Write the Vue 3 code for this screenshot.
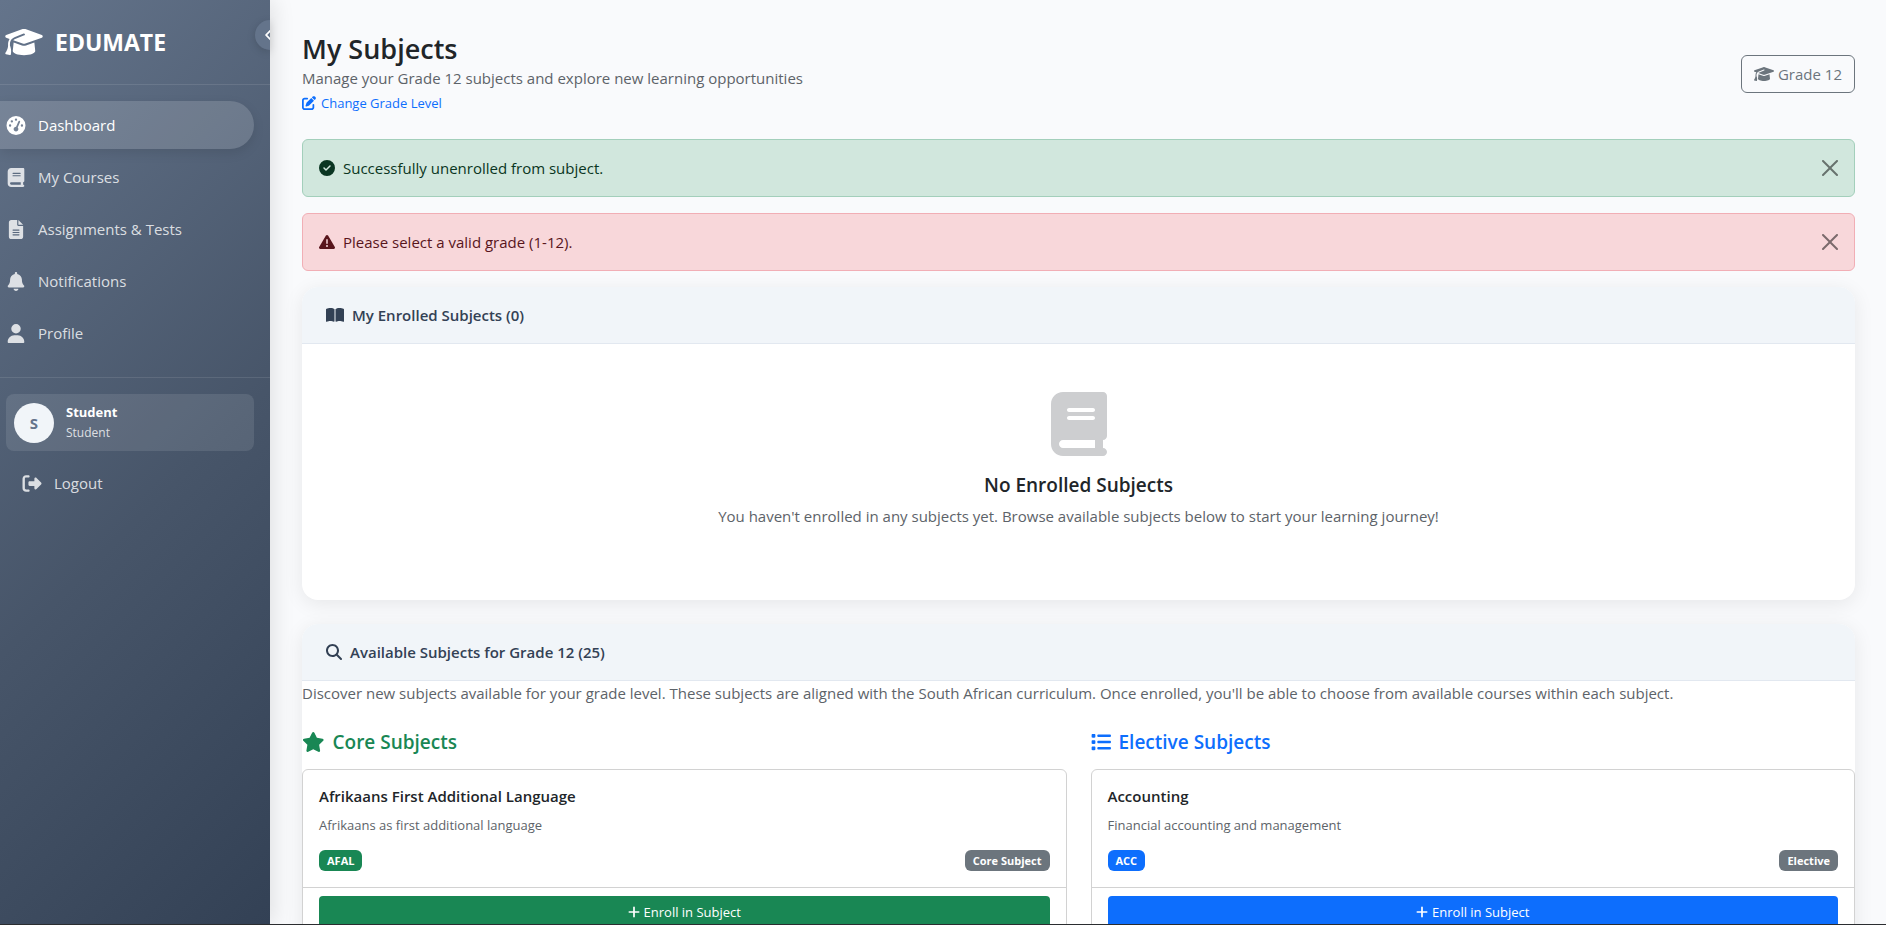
<script setup>
import { ref } from 'vue'

const icons = {
  cap: { w: 640, d: 'M320 32c-8.1 0-16.1 1.4-23.7 4.1L15.8 137.4C6.3 140.9 0 149.9 0 160s6.3 19.1 15.8 22.6l57.9 20.9C57.3 229.3 48 259.8 48 291.9v28.1c0 28.4-10.8 57.7-22.3 80.8c-6.5 13-13.9 25.8-22.5 37.6C0 442.7-.9 448.3 .9 453.4s6 8.9 11.2 10.2l64 16c4.2 1.1 8.7 .3 12.4-2s6.3-6.1 7.1-10.4c8.6-42.8 4.3-81.2-2.1-108.7C90.3 344.3 86 329.8 80 316.5V291.9c0-30.2 10.2-58.7 27.9-81.5c12.9-15.5 29.6-28 49.2-35.7l157-61.7c8.2-3.2 17.5 .8 20.7 9s-.8 17.5-9 20.7l-157 61.7c-12.4 4.9-23.3 12.4-32.2 21.6l159.6 57.6c7.6 2.7 15.6 4.1 23.7 4.1s16.1-1.4 23.7-4.1L624.2 182.6c9.5-3.4 15.8-12.5 15.8-22.6s-6.3-19.1-15.8-22.6L343.7 36.1C336.1 33.4 328.1 32 320 32zM128 408c0 35.3 86 72 192 72s192-36.7 192-72L496.7 262.6 354.5 314c-11.1 4-22.8 6-34.5 6s-23.5-2-34.5-6L143.3 262.6 128 408z' },
  gauge: { w: 512, d: 'M0 256a256 256 0 1 1 512 0A256 256 0 1 1 0 256zM288 96a32 32 0 1 0 -64 0 32 32 0 1 0 64 0zM256 416c35.3 0 64-28.7 64-64c0-17.4-6.9-33.1-18.1-44.6L366 161.7c5.3-12.1-.2-26.3-12.3-31.6s-26.3 .2-31.6 12.3L257.9 288c-.6 0-1.3 0-1.9 0c-35.3 0-64 28.7-64 64s28.7 64 64 64zM176 144a32 32 0 1 0 -64 0 32 32 0 1 0 64 0zM96 288a32 32 0 1 0 0-64 32 32 0 1 0 0 64zm352-32a32 32 0 1 0 -64 0 32 32 0 1 0 64 0z' },
  book: { w: 448, d: 'M96 0C43 0 0 43 0 96V416c0 53 43 96 96 96H384h32c17.7 0 32-14.3 32-32s-14.3-32-32-32V384c17.7 0 32-14.3 32-32V32c0-17.7-14.3-32-32-32H384 96zm0 384H352v64H96c-17.7 0-32-14.3-32-32s14.3-32 32-32zm32-240c0-8.8 7.2-16 16-16H336c8.8 0 16 7.2 16 16s-7.2 16-16 16H144c-8.8 0-16-7.2-16-16zm16 48H336c8.8 0 16 7.2 16 16s-7.2 16-16 16H144c-8.8 0-16-7.2-16-16s7.2-16 16-16z' },
  file: { w: 384, d: 'M64 0C28.7 0 0 28.7 0 64V448c0 35.3 28.7 64 64 64H320c35.3 0 64-28.7 64-64V160H256c-17.7 0-32-14.3-32-32V0H64zM256 0V128H384L256 0zM112 256H272c8.8 0 16 7.2 16 16s-7.2 16-16 16H112c-8.8 0-16-7.2-16-16s7.2-16 16-16zm0 64H272c8.8 0 16 7.2 16 16s-7.2 16-16 16H112c-8.8 0-16-7.2-16-16s7.2-16 16-16zm0 64H272c8.8 0 16 7.2 16 16s-7.2 16-16 16H112c-8.8 0-16-7.2-16-16s7.2-16 16-16z' },
  bell: { w: 448, d: 'M224 0c-17.7 0-32 14.3-32 32V51.2C119 66 64 130.6 64 208v18.8c0 47-17.3 92.4-48.5 127.6l-7.4 8.3c-8.4 9.4-10.4 22.9-5.3 34.4S19.4 416 32 416H416c12.6 0 24-7.4 29.2-18.9s3.1-25-5.3-34.4l-7.4-8.3C401.3 319.2 384 273.9 384 226.8V208c0-77.4-55-142-128-156.8V32c0-17.7-14.3-32-32-32zm45.3 493.3c12-12 18.7-28.3 18.7-45.3H224 160c0 17 6.7 33.3 18.7 45.3s28.3 18.7 45.3 18.7s33.3-6.7 45.3-18.7z' },
  user: { w: 448, d: 'M224 256A128 128 0 1 0 224 0a128 128 0 1 0 0 256zm-45.7 48C79.8 304 0 383.8 0 482.3C0 498.7 13.3 512 29.7 512H418.3c16.4 0 29.7-13.3 29.7-29.7C448 383.8 368.2 304 269.7 304H178.3z' },
  logout: { w: 512, d: 'M377.9 105.9L500.7 228.7c7.2 7.2 11.3 17.1 11.3 27.3s-4.1 20.1-11.3 27.3L377.9 406.1c-6.4 6.4-15 9.9-24 9.9c-18.7 0-33.9-15.2-33.9-33.9l0-62.1-128 0c-17.7 0-32-14.3-32-32l0-64c0-17.7 14.3-32 32-32l128 0 0-62.1c0-18.7 15.2-33.9 33.9-33.9c9 0 17.6 3.6 24 9.9zM160 96L96 96c-17.7 0-32 14.3-32 32l0 256c0 17.7 14.3 32 32 32l64 0c17.7 0 32 14.3 32 32s-14.3 32-32 32l-64 0c-53 0-96-43-96-96L0 128C0 75 43 32 96 32l64 0c17.7 0 32 14.3 32 32s-14.3 32-32 32z' },
  chevron: { w: 320, d: 'M9.4 233.4c-12.5 12.5-12.5 32.8 0 45.3l192 192c12.5 12.5 32.8 12.5 45.3 0s12.5-32.8 0-45.3L77.3 256 246.6 86.6c12.5-12.5 12.5-32.8 0-45.3s-32.8-12.5-45.3 0l-192 192z' },
  edit: { w: 512, d: 'M471.6 21.7c-21.9-21.9-57.3-21.9-79.2 0L362.3 51.7l97.9 97.9 30.1-30.1c21.9-21.9 21.9-57.3 0-79.2L471.6 21.7zm-299.2 220c-6.1 6.1-10.8 13.6-13.5 21.9l-29.6 88.8c-2.9 8.6-.6 18.1 5.8 24.6s15.9 8.7 24.6 5.8l88.8-29.6c8.2-2.7 15.7-7.4 21.9-13.5L437.7 172.3 339.7 74.3 172.4 241.7zM96 64C43 64 0 107 0 160V416c0 53 43 96 96 96H352c53 0 96-43 96-96V320c0-17.7-14.3-32-32-32s-32 14.3-32 32v96c0 17.7-14.3 32-32 32H96c-17.7 0-32-14.3-32-32V160c0-17.7 14.3-32 32-32h96c17.7 0 32-14.3 32-32s-14.3-32-32-32H96z' },
  check: { w: 512, d: 'M256 512A256 256 0 1 0 256 0a256 256 0 1 0 0 512zM369 209L241 337c-9.4 9.4-24.6 9.4-33.9 0l-64-64c-9.4-9.4-9.4-24.6 0-33.9s24.6-9.4 33.9 0l47 47L335 175c9.4-9.4 24.6-9.4 33.9 0s9.4 24.6 0 33.9z' },
  warning: { w: 512, d: 'M256 32c14.2 0 27.3 7.5 34.5 19.8l216 368c7.3 12.4 7.3 27.7 .2 40.1S486.3 480 472 480H40c-14.3 0-27.6-7.7-34.7-20.1s-7-27.8 .2-40.1l216-368C228.7 39.5 241.8 32 256 32zm0 128c-13.3 0-24 10.7-24 24V296c0 13.3 10.7 24 24 24s24-10.7 24-24V184c0-13.3-10.7-24-24-24zm32 224a32 32 0 1 0 -64 0 32 32 0 1 0 64 0z' },
  open: { w: 576, d: 'M249.6 471.5c10.8 3.8 22.4-4.1 22.4-15.5V78.6c0-4.2-1.6-8.4-5-11C247.4 52 202.4 32 144 32C93.5 32 46.3 45.3 18.1 56.1C6.8 60.5 0 71.7 0 83.8V454.1c0 11.9 12.8 20.2 24.1 16.5C55.6 460.1 105.5 448 144 448c33.9 0 79 14 105.6 23.5zm76.8 0C353 462 398.1 448 432 448c38.5 0 88.4 12.1 119.9 22.6c11.3 3.8 24.1-4.6 24.1-16.5V83.8c0-12.1-6.8-23.3-18.1-27.6C529.7 45.3 482.5 32 432 32c-58.4 0-103.4 20-123 35.6c-3.3 2.6-5 6.8-5 11V456c0 11.4 11.7 19.3 22.4 15.5z' },
  search: { w: 512, d: 'M416 208c0 45.9-14.9 88.3-40 122.7L502.6 457.4c12.5 12.5 12.5 32.8 0 45.3s-32.8 12.5-45.3 0L330.7 376c-34.4 25.2-76.8 40-122.7 40C93.1 416 0 322.9 0 208S93.1 0 208 0S416 93.1 416 208zM208 352a144 144 0 1 0 0-288 144 144 0 1 0 0 288z' },
  star: { w: 576, d: 'M316.9 18C311.6 7 300.4 0 288.1 0s-23.4 7-28.8 18L195 150.3 51.4 171.5c-12 1.8-22 10.2-25.7 21.7s-.7 24.2 7.9 32.7L137.8 329 113.2 474.7c-2 12 3 24.2 12.9 31.3s23 8 33.8 2.3l128.3-68.5 128.3 68.5c10.8 5.7 23.9 4.9 33.8-2.3s14.9-19.3 12.9-31.3L438.5 329 542.7 225.9c8.6-8.5 11.7-21.2 7.9-32.7s-13.7-19.9-25.7-21.7L381.2 150.3 316.9 18z' },
  list: { w: 512, d: 'M40 48C26.7 48 16 58.7 16 72v48c0 13.3 10.7 24 24 24H88c13.3 0 24-10.7 24-24V72c0-13.3-10.7-24-24-24H40zM192 64c-17.7 0-32 14.3-32 32s14.3 32 32 32H480c17.7 0 32-14.3 32-32s-14.3-32-32-32H192zm0 160c-17.7 0-32 14.3-32 32s14.3 32 32 32H480c17.7 0 32-14.3 32-32s-14.3-32-32-32H192zm0 160c-17.7 0-32 14.3-32 32s14.3 32 32 32H480c17.7 0 32-14.3 32-32s-14.3-32-32-32H192zM16 232v48c0 13.3 10.7 24 24 24H88c13.3 0 24-10.7 24-24V232c0-13.3-10.7-24-24-24H40c-13.3 0-24 10.7-24 24zM40 368c-13.3 0-24 10.7-24 24v48c0 13.3 10.7 24 24 24H88c13.3 0 24-10.7 24-24V392c0-13.3-10.7-24-24-24H40z' },
  plus: { w: 448, d: 'M256 80c0-17.7-14.3-32-32-32s-32 14.3-32 32V224H48c-17.7 0-32 14.3-32 32s14.3 32 32 32H192V432c0 17.7 14.3 32 32 32s32-14.3 32-32V288H400c17.7 0 32-14.3 32-32s-14.3-32-32-32H256V80z' },
}
const box = (name) => `0 0 ${icons[name].w} 512`

const nav = [
  { label: 'Dashboard', icon: 'gauge', active: true },
  { label: 'My Courses', icon: 'book' },
  { label: 'Assignments & Tests', icon: 'file' },
  { label: 'Notifications', icon: 'bell' },
  { label: 'Profile', icon: 'user' },
]

const alerts = ref([
  { kind: 'success', icon: 'check', text: 'Successfully unenrolled from subject.' },
  { kind: 'danger', icon: 'warning', text: 'Please select a valid grade (1-12).' },
])
const dismiss = (item) => {
  alerts.value = alerts.value.filter((a) => a !== item)
}

const groups = [
  {
    kind: 'core', title: 'Core Subjects', icon: 'star',
    subject: { name: 'Afrikaans First Additional Language', text: 'Afrikaans as first additional language', code: 'AFAL', type: 'Core Subject' },
  },
  {
    kind: 'elective', title: 'Elective Subjects', icon: 'list',
    subject: { name: 'Accounting', text: 'Financial accounting and management', code: 'ACC', type: 'Elective' },
  },
]
</script>

<template>
  <div class="shell">
    <aside class="sidebar">
      <div class="brand">
        <svg class="brand-icon" :viewBox="box('cap')" aria-hidden="true"><path :d="icons.cap.d" /></svg>
        <span>EDUMATE</span>
      </div>
      <button class="toggle" type="button" aria-label="Collapse sidebar">
        <svg :viewBox="box('chevron')" aria-hidden="true"><path :d="icons.chevron.d" /></svg>
      </button>
      <nav class="nav">
        <a v-for="item in nav" :key="item.label" href="#" class="nav-link" :class="{ active: item.active }">
          <svg class="nav-icon" :viewBox="box(item.icon)" aria-hidden="true"><path :d="icons[item.icon].d" /></svg>
          <span>{{ item.label }}</span>
        </a>
      </nav>
      <div class="account">
        <div class="user">
          <div class="avatar">S</div>
          <div class="user-text">
            <strong>Student</strong>
            <span>Student</span>
          </div>
        </div>
        <a href="#" class="nav-link logout">
          <svg class="nav-icon" :viewBox="box('logout')" aria-hidden="true"><path :d="icons.logout.d" /></svg>
          <span>Logout</span>
        </a>
      </div>
    </aside>

    <main class="main">
      <header class="page-head">
        <div>
          <h1>My Subjects</h1>
          <p class="lead">Manage your Grade 12 subjects and explore new learning opportunities</p>
          <a href="#" class="change">
            <svg :viewBox="box('edit')" aria-hidden="true"><path :d="icons.edit.d" /></svg>
            <span>Change Grade Level</span>
          </a>
        </div>
        <button class="grade" type="button">
          <svg :viewBox="box('cap')" aria-hidden="true"><path :d="icons.cap.d" /></svg>
          <span>Grade 12</span>
        </button>
      </header>

      <div v-for="a in alerts" :key="a.kind" class="alert" :class="a.kind" role="alert">
        <svg class="alert-icon" :viewBox="box(a.icon)" aria-hidden="true"><path :d="icons[a.icon].d" /></svg>
        <span>{{ a.text }}</span>
        <button class="close" type="button" aria-label="Close" @click="dismiss(a)">
          <svg viewBox="0 0 16 16" aria-hidden="true"><path d="M.293.293a1 1 0 0 1 1.414 0L8 6.586 14.293.293a1 1 0 1 1 1.414 1.414L9.414 8l6.293 6.293a1 1 0 0 1-1.414 1.414L8 9.414l-6.293 6.293a1 1 0 0 1-1.414-1.414L6.586 8 .293 1.707a1 1 0 0 1 0-1.414z" /></svg>
        </button>
      </div>

      <section class="panel">
        <h2 class="panel-head">
          <svg class="icon-open" :viewBox="box('open')" aria-hidden="true"><path :d="icons.open.d" /></svg>
          <span>My Enrolled Subjects (0)</span>
        </h2>
        <div class="empty">
          <svg :viewBox="box('book')" aria-hidden="true"><path :d="icons.book.d" /></svg>
          <h3>No Enrolled Subjects</h3>
          <p>You haven't enrolled in any subjects yet. Browse available subjects below to start your learning journey!</p>
        </div>
      </section>

      <section class="panel">
        <h2 class="panel-head">
          <svg class="icon-search" :viewBox="box('search')" aria-hidden="true"><path :d="icons.search.d" /></svg>
          <span>Available Subjects for Grade 12 (25)</span>
        </h2>
        <p class="intro">Discover new subjects available for your grade level. These subjects are aligned with the South African curriculum. Once enrolled, you'll be able to choose from available courses within each subject.</p>
        <div class="columns">
          <div v-for="g in groups" :key="g.kind" class="group" :class="g.kind">
            <h3 class="group-title">
              <svg :viewBox="box(g.icon)" aria-hidden="true"><path :d="icons[g.icon].d" /></svg>
              <span>{{ g.title }}</span>
            </h3>
            <article class="subject">
              <div class="subject-body">
                <h4>{{ g.subject.name }}</h4>
                <p>{{ g.subject.text }}</p>
                <div class="badges">
                  <span class="badge code">{{ g.subject.code }}</span>
                  <span class="badge">{{ g.subject.type }}</span>
                </div>
              </div>
              <div class="subject-foot">
                <button class="enroll" type="button">
                  <svg :viewBox="box('plus')" aria-hidden="true"><path :d="icons.plus.d" /></svg>
                  <span>Enroll in Subject</span>
                </button>
              </div>
            </article>
          </div>
        </div>
      </section>
    </main>
  </div>
</template>

<style>
body {
  margin: 0;
  background: #f9fafc;
}
</style>

<style scoped>
.shell,
.shell * {
  box-sizing: border-box;
}
.shell {
  display: grid;
  grid-template-columns: 270px minmax(0, 1fr);
  height: 100vh;
  overflow: hidden;
  border-bottom: 1px solid #2b2d30;
  font-family: "Open Sans", "Noto Sans", sans-serif;
  font-size: 15px;
  line-height: 24px;
  color: #212529;
}
h1, h2, h3, h4, p {
  margin: 0;
}
svg {
  display: block;
  flex: none;
  fill: currentColor;
}
a {
  text-decoration: none;
}
button {
  font: inherit;
  cursor: pointer;
}

/* Sidebar */
.sidebar {
  position: relative;
  z-index: 1;
  clip-path: inset(0 -30px 0 0);
  background: linear-gradient(135deg, #64748b 0%, #475569 55%, #334155 100%);
  box-shadow: 4px 0 20px rgba(0, 0, 0, 0.1);
  color: #fff;
}
.brand {
  display: flex;
  align-items: center;
  gap: 12px;
  height: 85px;
  padding: 0 5px;
  border-bottom: 1px solid rgba(255, 255, 255, 0.1);
  font-size: 23px;
  font-weight: 700;
}
.brand-icon {
  width: 38px;
  height: 30px;
}
.toggle {
  position: absolute;
  top: 20px;
  right: 0;
  display: flex;
  align-items: center;
  width: 15px;
  height: 30px;
  padding: 0 0 0 10px;
  overflow: hidden;
  border: 0;
  border-radius: 15px 0 0 15px;
  background: #64748b;
  color: #fff;
  box-shadow: 0 2px 8px rgba(0, 0, 0, 0.15);
}
.toggle svg {
  width: 9px;
  height: 14px;
}
.nav {
  display: flex;
  flex-direction: column;
  gap: 4px;
  padding: 16px 16px 20px 0;
}
.nav-link {
  display: flex;
  align-items: center;
  gap: 12px;
  height: 48px;
  padding: 0 6px;
  border-radius: 0 24px 24px 0;
  color: rgba(255, 255, 255, 0.8);
}
.nav-link.active {
  background: rgba(255, 255, 255, 0.15);
  box-shadow: 0 4px 12px rgba(0, 0, 0, 0.1);
  color: #fff;
}
.nav-icon {
  width: 20px;
  height: 19px;
}
.account {
  padding: 16px 16px 16px 6px;
  border-top: 1px solid rgba(255, 255, 255, 0.1);
}
.user {
  display: flex;
  align-items: center;
  gap: 12px;
  padding: 8px;
  border-radius: 8px;
  background: rgba(255, 255, 255, 0.1);
}
.avatar {
  display: grid;
  place-items: center;
  width: 40px;
  height: 40px;
  border-radius: 50%;
  background: #f1f5f9;
  color: #64748b;
  font-weight: 700;
}
.user-text {
  display: flex;
  flex-direction: column;
  font-size: 13px;
  line-height: 20px;
}
.user-text span {
  font-size: 12px;
  line-height: 21px;
  color: rgba(255, 255, 255, 0.8);
}
.logout {
  margin-top: 8px;
  padding: 0 16px;
}

/* Page */
.main {
  padding: 32px 31px 32px 32px;
  overflow-y: auto;
  scrollbar-width: none;
}
.page-head {
  display: flex;
  align-items: center;
  justify-content: space-between;
  margin-bottom: 24px;
}
h1 {
  font-size: 27px;
  font-weight: 600;
  line-height: 34px;
}
.lead,
.empty p,
.intro {
  color: #5d6369;
}
.change {
  display: flex;
  align-items: center;
  gap: 5px;
  padding-top: 1px;
  color: #0d6efd;
  font-size: 13px;
}
.change svg {
  width: 14px;
  height: 14px;
}
.grade {
  display: flex;
  align-items: center;
  gap: 4px;
  height: 38px;
  padding: 0 12px;
  border: 1px solid #6c757d;
  border-radius: 6px;
  background: transparent;
  color: #6c757d;
}
.grade svg {
  width: 20px;
  height: 16px;
}

.alert {
  display: flex;
  align-items: center;
  gap: 8px;
  height: 58px;
  margin-bottom: 16px;
  padding: 0 16px;
  border: 1px solid;
  border-radius: 6px;
}
.alert.success {
  border-color: #a3cfbb;
  background: #d1e7dd;
  color: #0a3622;
}
.alert.danger {
  border-color: #f1aeb5;
  background: #f8d7da;
  color: #58151c;
}
.alert-icon {
  width: 16px;
  height: 16px;
}
.close {
  margin-left: auto;
  padding: 0;
  border: 0;
  background: none;
  color: #000;
  opacity: 0.5;
}
.close svg {
  width: 16px;
  height: 16px;
}

.panel {
  margin-bottom: 24px;
  overflow: hidden;
  border-radius: 16px;
  background: #fff;
  box-shadow: 0 4px 20px rgba(0, 0, 0, 0.08);
}
.panel-head {
  display: flex;
  align-items: center;
  gap: 8px;
  padding: 16px 24px;
  border-bottom: 1px solid #e2e8f0;
  background: #f1f5f9;
  color: #334155;
  font-size: 15px;
  font-weight: 600;
  line-height: 24px;
}
.icon-open {
  width: 18px;
  height: 16px;
}
.icon-search {
  width: 16px;
  height: 16px;
}
.empty {
  display: flex;
  flex-direction: column;
  align-items: center;
  padding: 48px 24px 72px;
  text-align: center;
}
.empty svg {
  width: 56px;
  height: 64px;
  color: #cdced0;
}
.empty h3 {
  margin: 16px 0 6px;
  font-size: 19px;
  font-weight: 600;
  line-height: 26px;
}
.columns {
  display: grid;
  grid-template-columns: 1fr 1fr;
  gap: 24px;
  padding-top: 24px;
}
.core {
  --accent: #198754;
}
.elective {
  --accent: #0d6efd;
}
.group-title {
  display: flex;
  align-items: center;
  gap: 8px;
  margin-bottom: 14px;
  color: var(--accent);
  font-size: 19px;
  font-weight: 600;
  line-height: 26px;
}
.group-title svg {
  height: 20px;
}
.subject {
  margin-bottom: 16px;
  border: 1px solid #d2d2d2;
  border-radius: 6px;
  background: #fff;
}
.subject-body {
  padding: 16px;
}
.subject h4 {
  margin-bottom: 8px;
  font-size: 15px;
  font-weight: 600;
  line-height: 21px;
}
.subject p {
  margin-bottom: 15px;
  color: #5d6369;
  font-size: 13px;
  line-height: 20px;
}
.badges {
  display: flex;
  justify-content: space-between;
}
.badge {
  padding: 0 8px;
  border-radius: 6px;
  background: #6c757d;
  color: #fff;
  font-size: 11px;
  font-weight: 700;
  line-height: 21px;
}
.badge.code {
  background: var(--accent);
}
.subject-foot {
  padding: 8px 16px;
  border-top: 1px solid #d2d2d2;
}
.enroll {
  display: flex;
  align-items: center;
  justify-content: center;
  gap: 4px;
  width: 100%;
  height: 31px;
  border: 0;
  border-radius: 4px;
  background: var(--accent);
  color: #fff;
  font-size: 13px;
}
.enroll svg {
  width: 12px;
  height: 14px;
}
</style>
